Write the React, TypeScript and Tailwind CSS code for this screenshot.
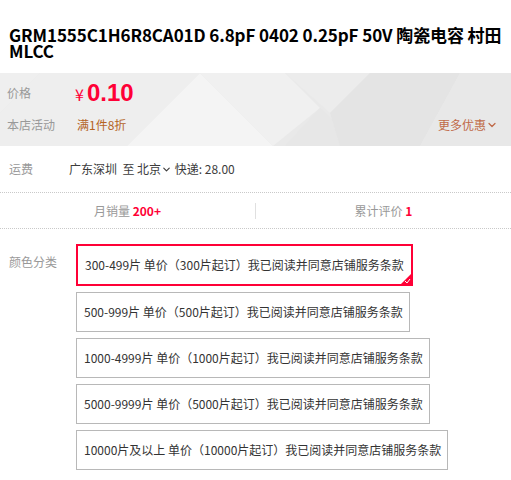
import React from 'react';
import { ChevronDown } from 'lucide-react';

const options = [
  { label: '300-499片 单价（300片起订）我已阅读并同意店铺服务条款', selected: true },
  { label: '500-999片 单价（500片起订）我已阅读并同意店铺服务条款' },
  { label: '1000-4999片 单价（1000片起订）我已阅读并同意店铺服务条款' },
  { label: '5000-9999片 单价（5000片起订）我已阅读并同意店铺服务条款' },
  { label: '10000片及以上 单价（10000片起订）我已阅读并同意店铺服务条款' },
];

const font = { fontFamily: '"Noto Sans CJK SC", "Noto Sans", sans-serif' };

const App: React.FC = () => {
  return (
    <div className="w-[511px] h-[480px] bg-white overflow-hidden" style={font}>
      {/* Title */}
      <h1 className="pl-[9px] pr-0 pt-[27px] pb-[14px] text-[17px] leading-[16px] font-bold text-black tracking-[-0.1px]">
        GRM1555C1H6R8CA01D 6.8pF 0402 0.25pF 50V 陶瓷电容 村田 MLCC
      </h1>

      {/* Price block */}
      <div className="relative h-[73px] bg-[#e9e9e9] overflow-hidden">
        <svg className="absolute inset-0" width="511" height="73" viewBox="0 0 511 73">
          <polygon points="0,0 40,0 0,40" fill="#efefef" />
          <polygon points="40,0 200,0 127,73 0,73 0,40" fill="#eeeeee" />
          <polygon points="200,0 273,73 127,73" fill="#f4f4f4" />
          <polygon points="200,0 285,0 320,35 273,73" fill="#f0f0f0" />
          <polygon points="285,0 370,0 330,40" fill="#ececec" />
          <polygon points="320,35 360,73 285,73" fill="#e7e7e7" />
          <polygon points="370,0 460,0 420,73 340,73 330,40" fill="#e4e4e4" />
          <polygon points="460,0 511,0 511,73 420,73" fill="#e8e8e8" />
        </svg>
        <div className="relative flex items-center pl-[7px] h-[40px]">
          <span className="w-[68px] text-[12px] text-[#999]">价格</span>
          <span className="flex items-baseline text-[#ff0036]">
            <span className="text-[16px] mr-[3px]">¥</span>
            <span className="text-[24px] font-bold leading-[24px] font-['Liberation_Sans',sans-serif]">0.10</span>
          </span>
        </div>
        <div className="relative flex items-center pl-[7px] pr-[13px] h-[24px]">
          <span className="w-[70px] text-[12px] text-[#999]">本店活动</span>
          <span className="text-[12px] text-[#b5641f]">满1件8折</span>
          <span className="ml-auto flex items-center text-[12px] text-[#c06a48]">
            更多优惠
            <ChevronDown size={12} strokeWidth={2.5} />
          </span>
        </div>
      </div>

      {/* Shipping */}
      <div className="flex items-center h-[46px] pl-[9px] text-[12px]">
        <span className="w-[60px] text-[#999]">运费</span>
        <span className="flex items-center text-[#3c3c3c]">
          广东深圳&nbsp;&nbsp;至&nbsp;北京
          <ChevronDown size={11} strokeWidth={2.5} />
          &nbsp;快递: 28.00
        </span>
      </div>

      {/* Stats */}
      <div className="flex items-center h-[37px] border-y border-dotted border-[#c9c9c9] text-[12px]">
        <div className="flex-1 text-center text-[#999]">
          月销量 <span className="font-bold text-[#ff0036]">200+</span>
        </div>
        <div className="w-px h-[16px] bg-[#e0e0e0]" />
        <div className="flex-1 text-center text-[#999]">
          累计评价 <span className="font-bold text-[#ff0036]">1</span>
        </div>
      </div>

      {/* Options */}
      <div className="flex pl-[9px] pt-[15px]">
        <span className="w-[67px] pt-[9px] text-[12px] text-[#999]">颜色分类</span>
        <div className="flex flex-col items-start gap-[6px]">
          {options.map((o) => (
            <div
              key={o.label}
              className={
                o.selected
                  ? 'relative h-[42px] flex items-center pl-[7px] pr-[7px] border-2 border-[#ff0036] text-[12px] text-[#333]'
                  : 'relative h-[40px] flex items-center pl-[7px] pr-[6px] border border-[#b8b8b8] text-[12px] text-[#333]'
              }
            >
              {o.label}
              {o.selected && (
                <svg className="absolute right-0 bottom-0" width="10" height="10" viewBox="0 0 10 10">
                  <polygon points="10,0 10,10 0,10" fill="#ff0036" />
                  <polyline points="4,7 6,9 9,5" fill="none" stroke="#fff" strokeWidth="1" />
                </svg>
              )}
            </div>
          ))}
        </div>
      </div>
    </div>
  );
};

export default App;
